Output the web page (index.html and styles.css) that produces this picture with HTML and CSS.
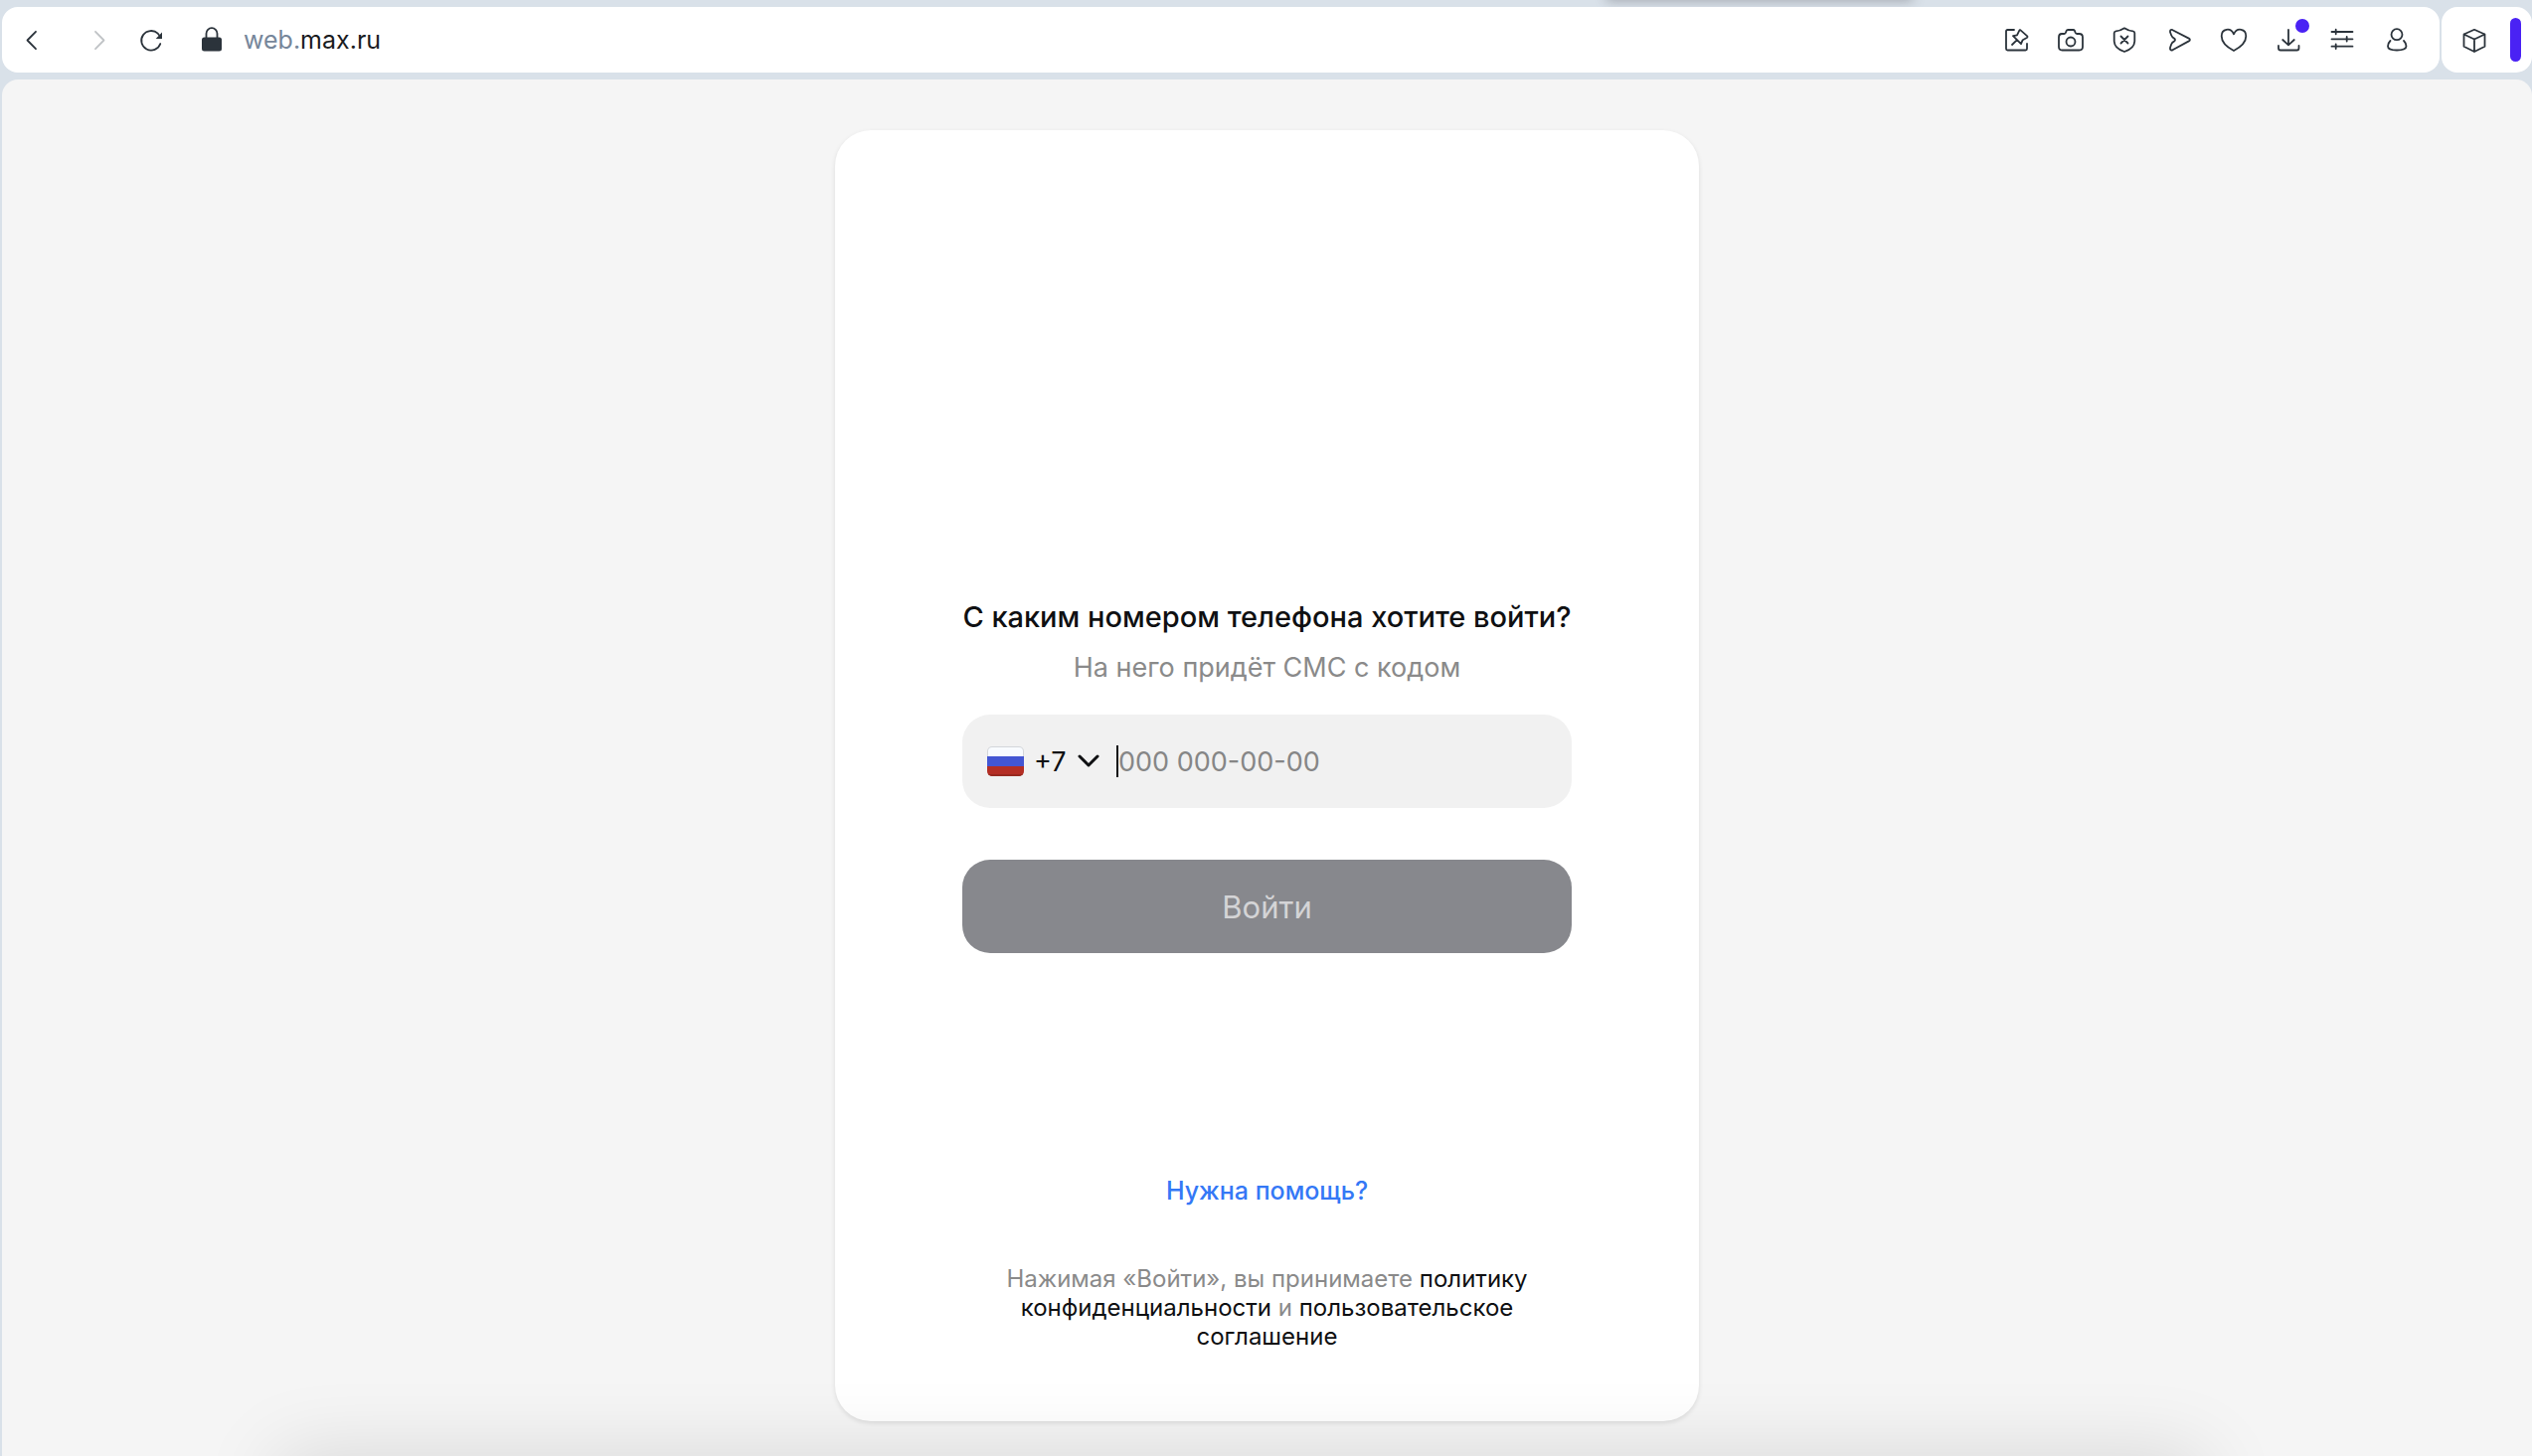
FILE: index.html
```html
<!DOCTYPE html>
<html lang="ru">
<head>
<meta charset="utf-8">
<title>MAX</title>
<meta name="viewport" content="width=device-width, initial-scale=1">
<link rel="stylesheet" href="styles.css">
</head>
<body>
<div class="browser">
  <header class="chrome">
    <nav class="toolbar" aria-label="Панель браузера">
      <div class="nav-buttons">
        <button class="icon-button back" type="button" aria-label="Назад"><svg class="icon" viewBox="0 0 32 32"><path d="M20 7.800 11.500 16.500 20 25.200"/></svg></button>
        <button class="icon-button" type="button" aria-label="Вперёд" disabled><svg class="icon" viewBox="0 0 32 32"><path d="M12 7.800 20.500 16.500 12 25.200"/></svg></button>
        <button class="icon-button" type="button" aria-label="Обновить"><svg class="icon" viewBox="0 0 32 32"><path d="M25.300 20A9.800 9.800 0 1 1 22.800 9.700L24 11.200"/><path class="solid" d="M27 8.500V15H20.700Z"/></svg></button>
      </div>
      <div class="address">
        <svg class="icon lock" viewBox="0 0 32 32" aria-hidden="true"><path d="M10.500 14V9.700a5.500 5.500 0 0 1 11 0V14"/><rect class="solid" x="6" y="13.500" width="20" height="14" rx="2.500"/></svg>
        <span class="url"><span class="subdomain">web.</span>max.ru</span>
      </div>
      <div class="actions">
        <button class="icon-button" type="button" aria-label="Закрепить"><svg class="icon" viewBox="0 0 32 32"><path d="M14 6H7.500Q6 6 6 7.500V25Q6 26.500 7.500 26.500H25.500Q27 26.500 27 25V20"/><path d="M20.500 6.300 27.300 12.300Q27.800 13.400 26.800 14L22.700 16.200 21 20.200 13 12.200 17 11.300 19.200 6.800Q19.700 5.800 20.500 6.300ZM17 16.200 12 21"/></svg></button>
        <button class="icon-button" type="button" aria-label="Снимок"><svg class="icon" viewBox="0 0 32 32"><path d="M7 10H9.500Q10.600 10 11 8.800L11.600 7Q12 6 13.200 6H18.300Q19.500 6 20 7L20.600 8.800Q21 10 22.200 10H24.500Q28 10 28 13.500V23Q28 26.500 24.500 26.500H7.500Q4 26.500 4 23V13.500Q4 10 7 10Z"/><circle cx="16" cy="18" r="4.500"/></svg></button>
        <button class="icon-button" type="button" aria-label="Защита"><svg class="icon" viewBox="0 0 32 32"><path d="M16 4.300Q20.500 7.300 24.500 7.300Q26.300 7.600 26.300 9.300V17.500Q26 24.700 16 28Q6 24.700 5.700 17.500V9.300Q5.700 7.600 7.500 7.300Q11.500 7.300 16 4.300Z"/><path d="M12.500 12.500 19.500 19.500M19.500 12.500 12.500 19.500"/></svg></button>
        <button class="icon-button" type="button" aria-label="Отправить"><svg class="icon" viewBox="0 0 32 32"><path d="M9.500 6.200 25.800 14.600Q28 16 25.800 17.400L9.500 26.300Q6.600 27.200 7 24L8.200 20.500Q9 18.500 11 17.600Q13 16 11 14.600Q9 13.500 8.200 11.500L7 8.300Q6.600 5.200 9.500 6.200Z"/></svg></button>
        <button class="icon-button" type="button" aria-label="Избранное"><svg class="icon" viewBox="0 0 32 32"><path d="M16 27Q3.700 20.500 3.700 12.200C3.700 5 12.700 3 16 10.300C19.300 3 28.300 5 28.300 12.200Q28.300 20.500 16 27Z"/></svg></button>
        <button class="icon-button" type="button" aria-label="Загрузки"><svg class="icon" viewBox="0 0 32 32"><path d="M16 6V21M10.200 16 16 21.300 21.800 16M6 22V24.500Q6 26.500 8 26.500H24.500Q26.500 26.500 26.500 24.500V22"/></svg><span class="badge"></span></button>
        <button class="icon-button" type="button" aria-label="Настройки"><svg class="icon" viewBox="0 0 32 32"><path d="M5.500 8H26.500M5.500 15.300H26.500M5.500 22.700H26.500M9.700 5.700V10.300M20.700 13V17.600M9.700 20.400V25"/></svg></button>
        <button class="icon-button" type="button" aria-label="Профиль"><svg class="icon" viewBox="0 0 32 32"><circle cx="16" cy="10.700" r="5.500"/><path d="M9.500 17Q7 19.500 7 22.500Q7 26.500 16 26.500Q25.500 26.500 25.500 22.500Q25.500 19.500 23 17"/></svg></button>
      </div>
    </nav>
    <div class="side-tools">
      <button class="icon-button" type="button" aria-label="Расширения"><svg class="icon" viewBox="0 0 32 32"><path d="M16 5.800 26.500 10.500V22.800L16 28 5.500 22.800V10.500ZM5.500 10.500 16 15.500 26.500 10.500M16 15.500V28"/></svg></button>
      <span class="side-marker"></span>
    </div>
  </header>
  <main class="page">
    <section class="card">
      <form class="login">
        <h1 class="title">С каким номером телефона хотите войти?</h1>
        <p class="subtitle">На него придёт СМС с кодом</p>
        <div class="phone-field">
          <svg class="flag" viewBox="0 0 37 30" aria-hidden="true"><clipPath id="flag-shape"><rect width="37" height="30" rx="5"/></clipPath><g clip-path="url(#flag-shape)"><rect width="37" height="30" fill="#d3d6da"/><path fill="#f8fbff" d="M1 5Q1 1 5 1H32Q36 1 36 5V10H1Z"/><path fill="#4356d3" d="M0 10H37V20H0Z"/><path fill="#b42e24" d="M0 20H37V30H0Z"/><path fill="#98291f" d="M1 28H36V30H1Z"/></g></svg>
          <div class="country">
            <select class="code" aria-label="Код страны"><option>+7</option></select>
            <svg class="chevron" viewBox="0 0 24 16" aria-hidden="true"><path d="M3 3 12 12 21 3"/></svg>
          </div>
          <span class="caret"></span>
          <input class="phone" type="tel" aria-label="Номер телефона" placeholder="000 000-00-00">
        </div>
        <button class="submit" type="submit" disabled>Войти</button>
      </form>
      <footer class="card-footer">
        <a class="help" href="#">Нужна помощь?</a>
        <p class="legal">Нажимая «Войти», вы принимаете <a href="#">политику конфиденциальности</a> и <a href="#">пользовательское соглашение</a></p>
      </footer>
    </section>
  </main>
</div>
</body>
</html>
```
FILE: styles.css
```css
*,
*::before,
*::after {
  box-sizing: border-box;
}

body {
  margin: 0;
  font-family: Inter, "Noto Sans", sans-serif;
  color: #0f1012;
}

button,
input,
select {
  margin: 0;
  padding: 0;
  border: 0;
  background: none;
  font: inherit;
  color: inherit;
  outline: 0;
}

h1,
p {
  margin: 0;
}

a {
  color: inherit;
  text-decoration: none;
}

.browser {
  position: relative;
  display: flex;
  flex-direction: column;
  min-height: 100vh;
  overflow: hidden;
  background: #d9e1e9;
}

/* shadow cast by the tab preview above the toolbar */
.browser::before {
  content: "";
  position: absolute;
  top: -20px;
  left: 63.500%;
  width: 12%;
  height: 20px;
  box-shadow: 0 0 12px 1px rgba(60, 60, 70, 0.35);
}

/* shadow cast by the dock below the window */
.browser::after {
  content: "";
  position: absolute;
  top: 100%;
  left: 11%;
  right: 13%;
  height: 80px;
  box-shadow: 0 0 80px rgba(0, 0, 0, 0.13);
  pointer-events: none;
}

.chrome {
  position: relative;
  display: flex;
  gap: 2px;
  padding: 7px 0 7px 2px;
}

.toolbar,
.side-tools {
  display: flex;
  align-items: center;
  height: 66px;
  border-radius: 16px;
  background: #fff;
}

.toolbar {
  flex: 1;
  padding: 0 27px 0 14px;
}

.nav-buttons {
  display: flex;
  gap: 20px;
}

.back {
  margin-right: 16px;
}

.icon-button {
  position: relative;
  display: block;
  width: 32px;
  height: 32px;
}

.icon {
  display: block;
  width: 32px;
  height: 32px;
  fill: none;
  stroke: #2b333b;
  stroke-width: 1.800;
  stroke-linecap: round;
  stroke-linejoin: round;
}

.icon .solid {
  fill: #2b333b;
  stroke: none;
}

.icon-button:disabled .icon {
  stroke: #c0c3c6;
}

.address {
  display: flex;
  flex: 1;
  align-items: center;
  gap: 16px;
  margin-left: 29px;
}

.url {
  font-size: 25px;
  line-height: 32px;
  color: #1a1c1f;
}

.subdomain {
  color: #76869a;
}

.actions {
  display: flex;
  justify-content: space-between;
  width: 415px;
}

.badge {
  position: absolute;
  top: -5px;
  right: -5px;
  width: 14px;
  height: 14px;
  border-radius: 50%;
  background: #4a22f4;
}

.side-tools {
  justify-content: space-between;
  width: 91px;
  padding: 0 11px 0 17px;
}

.side-marker {
  width: 11px;
  height: 44px;
  border-radius: 6px;
  background: #4a22f4;
}

.page {
  display: flex;
  flex: 1;
  justify-content: center;
  margin-left: 2px;
  padding: 51px 24px 35px;
  border-radius: 16px 16px 0 0;
  background: #f5f5f5;
}

.card {
  display: grid;
  grid-template-rows: 1fr auto 1fr;
  width: 100%;
  max-width: 869px;
  padding: 0 128px;
  border-radius: 36px;
  background: #fff;
  box-shadow: 0 2px 5px rgba(0, 0, 0, 0.1);
}

.login {
  display: flex;
  flex-direction: column;
  grid-row: 2;
}

.title {
  font-size: 29px;
  font-weight: 500;
  line-height: 38px;
  text-align: center;
  white-space: nowrap;
}

.subtitle {
  margin-top: 14px;
  font-size: 27px;
  line-height: 36px;
  text-align: center;
  color: #8a8a8a;
}

.phone-field {
  display: flex;
  align-items: center;
  height: 94px;
  margin-top: 29px;
  padding: 0 25px;
  border-radius: 28px;
  background: #f1f1f1;
  font-size: 27px;
}

.flag {
  width: 37px;
  height: 30px;
}

.country {
  display: grid;
  align-items: center;
  width: 67px;
  margin-left: 10px;
}

.code {
  grid-area: 1 / 1;
  width: 100%;
  appearance: none;
}

.chevron {
  grid-area: 1 / 1;
  justify-self: end;
  width: 24px;
  height: 16px;
  fill: none;
  stroke: #0f1012;
  stroke-width: 3;
  stroke-linecap: round;
  stroke-linejoin: round;
  pointer-events: none;
}

.caret {
  width: 2px;
  height: 32px;
  margin-left: 16px;
  background: #0f1012;
}

.phone {
  flex: 1;
  min-width: 0;
}

.phone::placeholder {
  color: #868686;
  opacity: 1;
}

.submit {
  height: 94px;
  margin-top: 52px;
  border-radius: 28px;
  background: #87888d;
  font-size: 31px;
  color: #d4d4d6;
}

.card-footer {
  display: flex;
  flex-direction: column;
  grid-row: 3;
  align-items: center;
  justify-content: flex-end;
  gap: 58px;
  padding: 0 32px 71px;
}

.help {
  font-size: 25px;
  font-weight: 500;
  line-height: 32px;
  color: #3478f6;
}

.legal {
  font-size: 24px;
  line-height: 29px;
  text-align: center;
  color: #8a8a8a;
}

.legal a {
  color: #0f1012;
}
```
